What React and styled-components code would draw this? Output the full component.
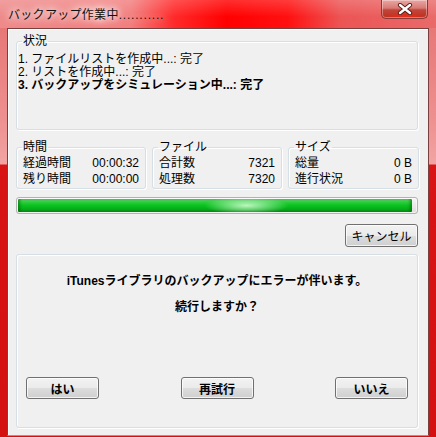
import React from "react";
import styled, { createGlobalStyle } from "styled-components";

const GlobalStyle = createGlobalStyle`
  html, body {
    margin: 0;
    padding: 0;
    background: #3a1010;
  }
  * {
    box-sizing: border-box;
  }
`;

const FONT = `"Liberation Sans", "Noto Sans CJK JP", sans-serif`;

const Window = styled.div`
  width: 436px;
  height: 437px;
  display: flex;
  flex-direction: column;
  padding: 0 7px 0 7px;
  font-family: ${FONT};
  font-size: 12px;
  color: #000;
  background: linear-gradient(
    to bottom,
    #e57070 0px,
    #ee9090 120px,
    #f2a4a4 164px,
    #d81414 165px,
    #d41010 100%
  );
  overflow: hidden;
`;

const TitleBar = styled.div`
  height: 28px;
  flex: none;
  display: flex;
  justify-content: space-between;
  align-items: flex-start;
  margin: 0 -7px;
  padding: 0 8px 0 8px;
  background:
    linear-gradient(to bottom, rgba(255, 255, 255, 0.18), rgba(255, 255, 255, 0) 60%),
    linear-gradient(
      90deg,
      #ee8a8a 0%,
      #f27e7e 30%,
      #ff2a2a 40%,
      #ff0000 52%,
      #ff1010 66%,
      #ec5454 78%,
      #e96a6a 100%
    );
`;

const TitleText = styled.span`
  margin-top: 7px;
  line-height: 16px;
  font-size: 12px;
  color: #111;
  letter-spacing: 0.3px;
  text-shadow: 0 0 6px #fff, 0 0 10px #fff, 0 0 14px rgba(255, 255, 255, 0.9);
`;

const Dots = styled.span`
  letter-spacing: 0.8px;
`;

const CloseButton = styled.div`
  width: 47px;
  height: 19px;
  display: flex;
  align-items: center;
  justify-content: center;
  border: 1px solid #8a3a36;
  border-top: none;
  border-radius: 0 0 5px 5px;
  background:
    radial-gradient(ellipse 22px 6px at 50% 100%, rgba(255, 40, 20, 0.9), rgba(255, 40, 20, 0)),
    linear-gradient(to bottom, #eba7a3 0%, #d77a74 45%, #c2453a 55%, #b8301f 100%);
  box-shadow: inset 0 0 0 1px rgba(255, 255, 255, 0.35);
`;

const Client = styled.div`
  flex: 1;
  display: flex;
  flex-direction: column;
  background: #f0f0f0;
  border: 1px solid #7a4040;
  border-bottom-color: #9a9a9a;
  box-shadow: inset 1px 1px 0 #ffffff;
  padding: 0 10px 0 8px;
  margin-bottom: 1px;
`;

const Group = styled.fieldset`
  margin: 0;
  padding: 0;
  min-width: 0;
  border: 1px solid #d5dfe5;
  border-radius: 3px;
  box-shadow: inset 1px 1px 0 #fff, 1px 1px 0 #fff;
`;

const Legend = styled.legend`
  margin-left: ${({ $offset }) => $offset}px;
  padding: 0 1px;
  line-height: 13px;
  font-size: 12px;
`;

const StatusGroup = styled(Group)`
  margin-top: 6px;
`;

const StatusBody = styled.div`
  height: 81px;
  padding: 5px 0 0 1px;
`;

const StatusLine = styled.div`
  line-height: 13px;
  font-weight: ${({ $bold }) => ($bold ? 700 : 400)};
  white-space: nowrap;
`;

const StatsRow = styled.div`
  display: grid;
  grid-template-columns: 130px 130px 131px;
  gap: 6px;
  margin-top: 11px;
`;

const StatsBody = styled.div`
  padding: 1px 6px 1px 6px;
`;

const StatLine = styled.div`
  display: flex;
  justify-content: space-between;
  line-height: 16px;
  font-size: 12px;
  white-space: nowrap;
`;

const Progress = styled.div`
  margin-top: 8px;
  height: 17px;
  border: 1px solid #b2b2b2;
  border-radius: 3px;
  padding: 1px;
  background: linear-gradient(to bottom, #f6f6f6, #dcdcdc);
  box-shadow: inset 0 0 0 1px rgba(255, 255, 255, 0.6);
`;

const ProgressFill = styled.div`
  height: 100%;
  border-radius: 1px;
  background:
    radial-gradient(ellipse 42px 9px at 58% 50%, rgba(220, 255, 220, 0.85), rgba(220, 255, 220, 0)),
    linear-gradient(
      to bottom,
      #5fd46a 0%,
      #2ccc3c 25%,
      #09c21f 50%,
      #05b019 75%,
      #0b8f17 100%
    );
  box-shadow: inset 3px 0 3px -1px rgba(0, 80, 0, 0.5), inset -3px 0 3px -1px rgba(0, 80, 0, 0.5);
`;

const CancelRow = styled.div`
  display: flex;
  justify-content: flex-end;
  margin-top: 10px;
`;

const Button = styled.button`
  width: 73px;
  height: ${({ $tall }) => ($tall ? 23 : 22)}px;
  padding: 0;
  border: 1px solid #707070;
  border-radius: 3px;
  font-family: ${FONT};
  font-size: 12px;
  font-weight: ${({ $bold }) => ($bold ? 700 : 400)};
  color: #000;
  background: linear-gradient(
    to bottom,
    #f2f2f2 0%,
    #ebebeb 50%,
    #dddddd 51%,
    #cfcfcf 100%
  );
  box-shadow: inset 0 0 0 1px rgba(255, 255, 255, 0.75);
  cursor: pointer;
`;

const Panel = styled.div`
  flex: 1;
  display: flex;
  flex-direction: column;
  margin-top: 7px;
  margin-bottom: 7px;
  border: 1px solid #d5dfe5;
  border-radius: 3px;
  box-shadow: inset 1px 1px 0 #fff, 1px 1px 0 #fff;
  padding: 18px 9px 28px 9px;
`;

const Message = styled.div`
  text-align: center;
  font-weight: 700;
  line-height: 16px;
  margin-bottom: ${({ $gap }) => $gap || 0}px;
`;

const ButtonRow = styled.div`
  margin-top: auto;
  display: flex;
  justify-content: space-between;
`;

const CloseIcon = () => (
  <svg width="16" height="12" viewBox="0 0 16 12">
    <path
      d="M3 2 L13 10 M13 2 L3 10"
      stroke="#5a1a14"
      strokeWidth="4.2"
      strokeLinecap="round"
      fill="none"
    />
    <path
      d="M3 2 L13 10 M13 2 L3 10"
      stroke="#ffffff"
      strokeWidth="2.4"
      strokeLinecap="round"
      fill="none"
    />
  </svg>
);

const stats = [
  {
    title: "時間",
    rows: [
      ["経過時間", "00:00:32"],
      ["残り時間", "00:00:00"],
    ],
  },
  {
    title: "ファイル",
    rows: [
      ["合計数", "7321"],
      ["処理数", "7320"],
    ],
  },
  {
    title: "サイズ",
    rows: [
      ["総量", "0 B"],
      ["進行状況", "0 B"],
    ],
  },
];

const steps = [
  { text: "1. ファイルリストを作成中...: 完了" },
  { text: "2. リストを作成中...: 完了" },
  { text: "3. バックアップをシミュレーション中...: 完了", bold: true },
];

export default function App() {
  const total = 7321;
  const done = 7320;
  const pct = Math.min(99, (done / total) * 100);

  return (
    <>
      <GlobalStyle />
      <Window>
        <TitleBar>
          <TitleText>
            バックアップ作業中<Dots>...........</Dots>
          </TitleText>
          <CloseButton>
            <CloseIcon />
          </CloseButton>
        </TitleBar>
        <Client>
          <StatusGroup>
            <Legend $offset={5}>状況</Legend>
            <StatusBody>
              {steps.map((s) => (
                <StatusLine key={s.text} $bold={s.bold}>
                  {s.text}
                </StatusLine>
              ))}
            </StatusBody>
          </StatusGroup>

          <StatsRow>
            {stats.map((g) => (
              <Group key={g.title}>
                <Legend $offset={5}>{g.title}</Legend>
                <StatsBody>
                  {g.rows.map(([label, value]) => (
                    <StatLine key={label}>
                      <span>{label}</span>
                      <span>{value}</span>
                    </StatLine>
                  ))}
                </StatsBody>
              </Group>
            ))}
          </StatsRow>

          <Progress>
            <ProgressFill style={{ width: `${pct}%` }} />
          </Progress>

          <CancelRow>
            <Button $tall>キャンセル</Button>
          </CancelRow>

          <Panel>
            <Message $gap={10}>iTunesライブラリのバックアップにエラーが伴います。</Message>
            <Message>続行しますか？</Message>
            <ButtonRow>
              <Button $bold>はい</Button>
              <Button $bold>再試行</Button>
              <Button $bold>いいえ</Button>
            </ButtonRow>
          </Panel>
        </Client>
      </Window>
    </>
  );
}
